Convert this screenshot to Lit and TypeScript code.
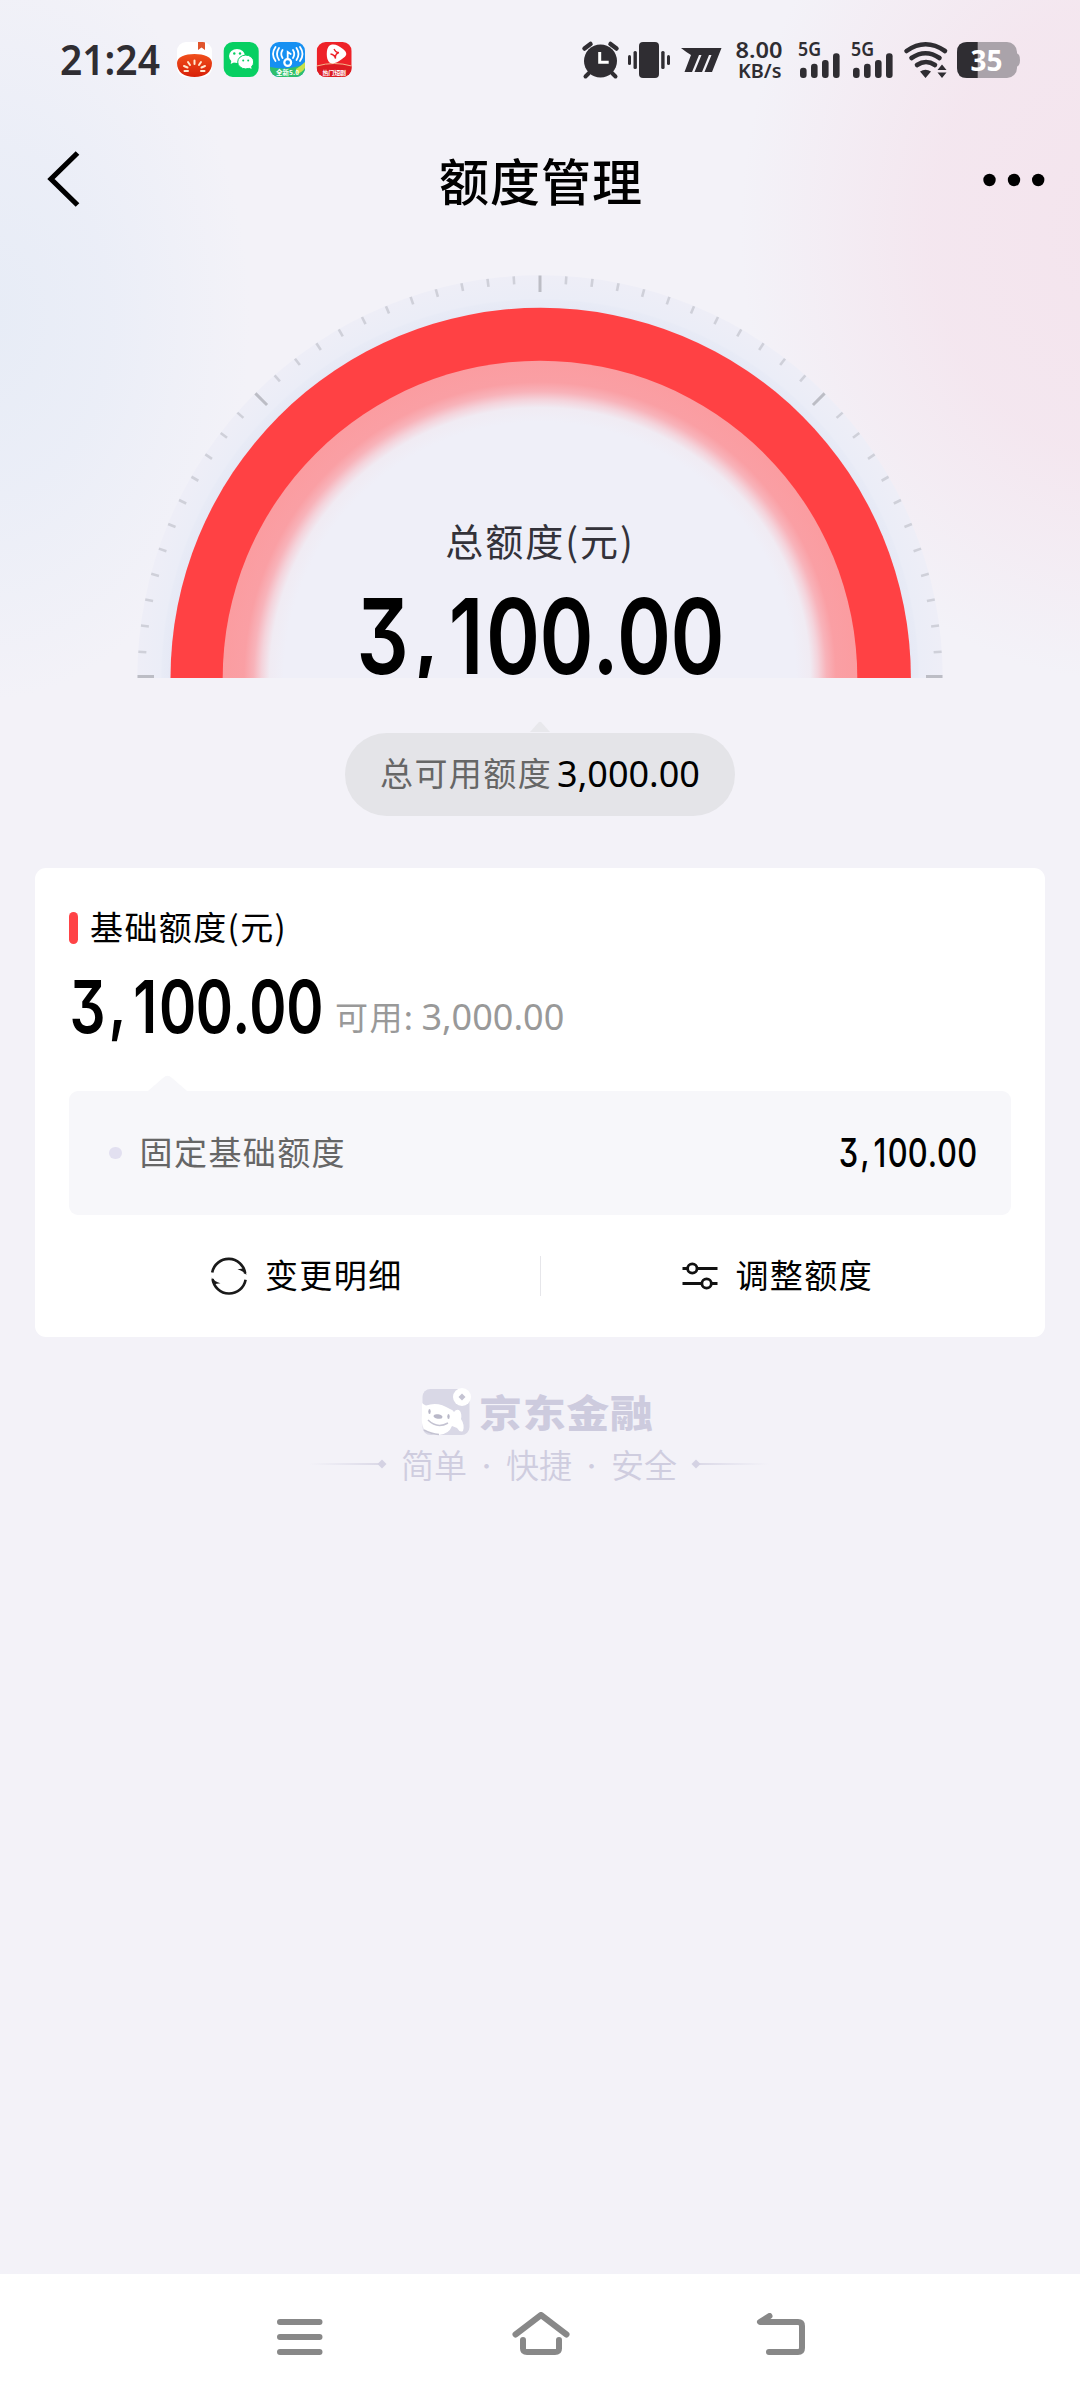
import { LitElement, html, css, svg } from "lit";
import { customElement, property } from "lit/decorators.js";

/** Amount set in a condensed DIN-like cut; glyph slots are laid out on a 361x80 grid. */
@customElement("din-amount")
class DinAmount extends LitElement {
  @property() value = "";
  @property({ type: Number }) width = 361;
  @property({ type: Number }) weight = 600;
  static styles = css`
    :host { display: block; }
    svg { display: block; overflow: visible; }
    text {
      font-family: Inter, "Liberation Sans", sans-serif;
      font-size: 105px;
      font-feature-settings: "cv09" 1;
      text-anchor: middle;
      fill: #000;
    }
  `;
  render() {
    const sx = 0.78;
    // Slot centres of the pattern d,ddd.dd
    const slots = [22.5, 66, 106, 153, 206.5, 245.5, 284, 337.5];
    return html`<svg width=${this.width} height=${(this.width * 80) / 361} viewBox="0 0 361 80">
      <text x="0" y="78" transform="scale(${sx} 1)" font-weight=${this.weight}>
        ${[...this.value].map((c, i) => svg`<tspan x=${slots[i] / sx} y=${c === "," ? 71 : 78}>${c}</tspan>`)}
      </text>
    </svg>`;
  }
}

@customElement("status-bar")
class StatusBar extends LitElement {
  static styles = css`
    :host { display: flex; height: 119px; padding: 0 56px 0 60px; justify-content: space-between; box-sizing: border-box; }
    svg { display: block; }
    text { font-family: "Noto Sans", "Open Sans", sans-serif; font-weight: 600; fill: #2f2d32; }
    .tiny { font-family: "Noto Sans CJK SC", sans-serif; font-weight: 700; fill: #fff; }
    .pct { font-weight: 700; fill: #fff; }
  `;
  bars(x: number) {
    return svg`
      <text x=${x - 2} y="56" font-size="19" textLength="23" lengthAdjust="spacingAndGlyphs">5G</text>
      <rect x=${x} y="67.7" width="6.6" height="10.3" rx="3"/>
      <rect x=${x + 11} y="63.7" width="6.6" height="14.3" rx="3"/>
      <rect x=${x + 22} y="60" width="6.6" height="18" rx="3"/>
      <rect x=${x + 33} y="53.3" width="6.6" height="24.7" rx="3"/>`;
  }
  render() {
    return html`
      <svg width="300" height="100" viewBox="60 0 300 100">
        <text x="60" y="74.500" font-size="42" textLength="100" lengthAdjust="spacingAndGlyphs">21:24</text>
        <defs>
          <linearGradient id="tomato" x1="0" y1="0" x2="0" y2="1"><stop offset="0" stop-color="#f0501c"/><stop offset="1" stop-color="#d81f08"/></linearGradient>
          <clipPath id="c1"><rect x="177" y="42" width="35" height="35" rx="9"/></clipPath>
          <clipPath id="c3"><rect x="270" y="42" width="35" height="35" rx="9"/></clipPath>
          <clipPath id="c4"><rect x="316.700" y="42" width="35" height="35" rx="9"/></clipPath>
        </defs>
        <g clip-path="url(#c1)">
          <rect x="177" y="42" width="35" height="35" fill="#fff"/>
          <path d="M198 42h7v8l-3.500-2.500L198 50z" fill="#e0542c"/>
          <path d="M177 63c0-6 8-9 17.500-9S212 57 212 63c0 9-7 14-17.500 14S177 72 177 63z" fill="url(#tomato)"/>
          <g stroke="#ffe9cf" stroke-width="2" stroke-linecap="round">
            <path d="M194.500 60.500v3.500M188 62l2 3M201 62l-2 3M184 66l3.500 1.500M205 66l-3.500 1.500M184.500 71h3.500M204.500 71H201"/>
          </g>
        </g>
        <rect x="223.700" y="42" width="35" height="35" rx="9" fill="#07cf62"/>
        <ellipse cx="237" cy="56" rx="8" ry="7" fill="#fff"/>
        <path d="M231.500 60l-.8 4 4-2z" fill="#fff"/>
        <ellipse cx="245.700" cy="62" rx="8" ry="6.900" fill="#fff" stroke="#07cf62" stroke-width="1"/>
        <path d="M248 67l3.500 2-.6-4z" fill="#fff"/>
        <g fill="#07cf62"><circle cx="234.300" cy="53.500" r="1.200"/><circle cx="240" cy="53.500" r="1.200"/><circle cx="243.200" cy="60.500" r="1"/><circle cx="248.200" cy="60.500" r="1"/></g>
        <g clip-path="url(#c3)">
          <rect x="270" y="42" width="35" height="35" fill="#1690f2"/>
          <path d="M270 67q17 4 35-3v13h-35z" fill="#2fbf6c"/>
          <path d="M296 69q5-3 9-7v6q-3 5-9 6z" fill="#c8e24a"/>
          <g fill="none" stroke="#fff" stroke-width="2.200" stroke-linecap="round">
            <circle cx="287.700" cy="62.500" r="3.400"/>
            <path d="M287.700 59V52l3 2M282.500 50q-2.500 4 0 8M293 50q2.500 4 0 8M279 48q-4 6 0 12M296.500 48q4 6 0 12M275.500 47q-5 7 0 14M300 47q5 7 0 14" stroke-width="1.800"/>
          </g>
          <text class="tiny" x="276" y="75" font-size="6.500" textLength="23">全新5.0</text>
        </g>
        <g clip-path="url(#c4)">
          <rect x="316.700" y="42" width="35" height="35" fill="#ee2228"/>
          <path d="M316.700 66q17.500-5 35 0v11h-35z" fill="#dc1c22"/>
          <path d="M316.700 66q17.500-5 35 0" stroke="#f5b58a" stroke-width="1" fill="none"/>
          <path d="M329 46c4-3 9-1 14 3 5 4 4 7-1 10-5 4-10 6-13 3-3-3-3-13 0-16z" fill="#fff"/>
          <path d="M334 49q2 4 5 3.500q-4 1-3.500 6q-1-4-5-4.500M335 58l.5-3" fill="none" stroke="#ee2228" stroke-width="1.300"/>
          <text class="tiny" x="322.500" y="74.500" font-size="6" textLength="23.500">热门短剧</text>
        </g>
      </svg>
      <svg width="446" height="100" viewBox="578 0 446 100" fill="#2f2d32">
        <circle cx="600.500" cy="61" r="16.500"/>
        <path d="M584.500 48.500l6-4.500M616.500 48.500l-6-4.500" stroke="#2f2d32" stroke-width="4.500" stroke-linecap="round"/>
        <path d="M589 73l-3.500 3.500M612 73l3.500 3.500" stroke="#2f2d32" stroke-width="4" stroke-linecap="round"/>
        <path d="M599.700 52v10.200h9" fill="none" stroke="#fff" stroke-width="3"/>
        <rect x="639" y="42" width="20" height="36" rx="4"/>
        <rect x="633.500" y="51" width="3.400" height="18" rx="1.500"/><rect x="628" y="55" width="3" height="10" rx="1.500"/>
        <rect x="661.200" y="51" width="3.400" height="18" rx="1.500"/><rect x="667" y="55" width="3" height="10" rx="1.500"/>
        <path d="M681 48h40.500l-9.500 24h-7.500l7-17h-2.500l-7 17h-7.500l7-17h-2.500l-7 17h-7.500l6.500-17q-5-3-10-7z"/>
        <text x="735.500" y="57.500" font-size="21" textLength="47" lengthAdjust="spacingAndGlyphs">8.00</text>
        <text x="738" y="78" font-size="19" textLength="43.500" lengthAdjust="spacingAndGlyphs">KB/s</text>
        ${this.bars(800)}${this.bars(853)}
        <g fill="none" stroke="#2f2d32" stroke-width="4.600" stroke-linecap="round">
          <path d="M906.500 51q19-13.500 38.500 0M911.500 58q14-9.500 28 0M917 65q9-6 18 0"/>
        </g>
        <path d="M920 71.500q5.500-3.500 11 0l-5.500 6.500zM942 64.500l4.500 5.500h-9zM942 78l4.500-5.500h-9z"/>
        <path d="M1015 53q5 0 5 7t-5 7z" fill="#aaa3aa"/>
        <rect x="957" y="42" width="60" height="36" rx="10" fill="#aaa3aa"/>
        <path d="M967 42h10.700v36H967q-10 0-10-10V52q0-10 10-10z"/>
        <text class="pct" x="970.500" y="70.500" font-size="28.500" textLength="32" lengthAdjust="spacingAndGlyphs">35</text>
      </svg>`;
  }
}

@customElement("quota-gauge")
class QuotaGauge extends LitElement {
  static styles = css`
    :host { display: grid; width: 810px; height: 405px; overflow: hidden; }
    .dial, .label { grid-area: 1 / 1; }
    .dial { display: block; }
    .label { display: flex; flex-direction: column; align-items: center; padding-top: 239px; }
    .caption { font-family: "Noto Sans CJK SC", sans-serif; font-size: 38px; line-height: 56px; letter-spacing: 2px; color: #33323a; margin-bottom: 28px; }
    .minor { stroke: #cfd0d9; stroke-width: 2.6; }
    .major { stroke: #bcbdc5; stroke-width: 3; }
  `;
  render() {
    const ticks = Array.from({ length: 49 }, (_, i) => i);
    return html`
      <svg class="dial" width="810" height="405" viewBox="-405 -405 810 405">
        <defs>
          <radialGradient id="glow" gradientUnits="userSpaceOnUse" cx="0" cy="0" r="320">
            <stop offset="0.800" stop-color="#efeff8"/>
            <stop offset="0.845" stop-color="#f0ebf3"/>
            <stop offset="0.870" stop-color="#f4d3db"/>
            <stop offset="0.895" stop-color="#f8b3ba"/>
            <stop offset="0.925" stop-color="#fa9fa4"/>
            <stop offset="1" stop-color="#fb9ca0"/>
          </radialGradient>
          <radialGradient id="rim" gradientUnits="userSpaceOnUse" cx="0" cy="0" r="402.700">
            <stop offset="0.910" stop-color="#e5e8f5"/>
            <stop offset="0.938" stop-color="#e8ebf6"/>
            <stop offset="0.942" stop-color="#ebedf7"/>
            <stop offset="1" stop-color="#eeeef7"/>
          </radialGradient>
        </defs>
        <circle r="402.700" fill="url(#rim)"/>
        <circle cx=".7" r="370.200" fill="#ff4144"/>
        <circle r="317.300" fill="url(#glow)"/>
        ${ticks.map((i) => {
          const major = i % 12 === 0;
          const flat = i === 0 ? 1.5 : i === 48 ? -1.5 : 0;
          return svg`<line class=${major ? "major" : "minor"} x1="-402.500" x2=${major ? -386 : -394.5}
            y1=${-flat} y2=${-flat} transform="rotate(${i * 3.75})"/>`;
        })}
      </svg>
      <div class="label">
        <div class="caption">总额度(元)</div>
        <din-amount value="3,100.00" width="361"></din-amount>
      </div>`;
  }
}

@customElement("app-root")
class AppRoot extends LitElement {
  static styles = css`
    :host {
      display: flex; flex-direction: column; width: 1080px; height: 2400px; box-sizing: border-box;
      font-family: "Noto Sans", "Noto Sans CJK SC", sans-serif; color: #000;
      background:
        radial-gradient(ellipse 380px 450px at 1120px 230px, #f4e4edff 0%, #f4e5eee0 50%, #f4e8f000 100%),
        radial-gradient(ellipse 260px 380px at -10px 320px, #e7ecf6ff 0%, #e9edf7d0 45%, #eef0f800 100%),
        #f3f2f8;
    }
    svg { display: block; }
    .header { display: flex; align-items: center; justify-content: space-between; height: 122px; padding: 0 34px 0 47px; }
    .title { font-family: "Noto Sans CJK SC", sans-serif; font-size: 50px; letter-spacing: 1px; line-height: 80px; font-weight: 450; padding: 0 0 2px 19px; }
    .hero { display: flex; flex-direction: column; align-items: center; padding-top: 32px; }
    .tip { margin-top: 43px; }
    .pill {
      display: flex; align-items: center; justify-content: center; gap: 5px; width: 390px; height: 83px; margin-top: 1px; padding-bottom: 3px;
      border-radius: 42px; background: #e4e4e8; font-size: 36px; box-sizing: border-box;
    }
    .cjk { font-family: "Noto Sans CJK SC", sans-serif; font-size: 33px; letter-spacing: 1.4px; line-height: 48px; padding-bottom: 4px; }
    .pill .cjk { padding-bottom: 3px; }
    .muted { color: #666; }
    .card { display: flex; flex-direction: column; margin: 52px 35px 0; height: 469px; padding: 0 34px; border-radius: 11px; background: #fff; box-sizing: border-box; }
    .heading { display: flex; align-items: center; gap: 12px; padding-top: 36px; height: 48px; }
    .mark { width: 9px; height: 32px; border-radius: 4.5px; background: #ff4346; }
    .total { display: flex; align-items: flex-end; gap: 14px; height: 82px; padding-left: 3px; color: #999; }
    .avail { display: flex; align-items: baseline; gap: 7px; font-size: 36px; line-height: 48px; margin-bottom: -10px; }
    .notch { margin: 41px 0 0 79px; }
    .panel { display: flex; align-items: center; height: 124px; padding: 0 35px 0 40px; border-radius: 9px; background: #f7f7fa; box-sizing: border-box; }
    .dot { width: 12.600px; height: 12.600px; border-radius: 50%; background: #e2e0f0; margin-right: 18px; }
    .grow { flex: 1; }
    .actions { display: flex; align-items: center; height: 122px; }
    .action { display: flex; flex: 1; align-items: center; justify-content: center; gap: 17px; padding-left: 4px; }
    .rule { width: 1px; height: 40px; background: #e6e6ea; }
    .brand { display: flex; flex-direction: column; align-items: center; margin-top: 49px; color: #cdcbde; }
    .logo { display: flex; align-items: center; gap: 8px; height: 52px; padding-right: 7px; }
    .name { font-family: "Noto Sans CJK SC", sans-serif; overflow: visible; }
    .slogan { display: flex; align-items: center; height: 52px; gap: 14px; color: #cfcddf; padding-right: 2px; }
    .slogan .cjk { letter-spacing: 0; font-size: 33px; font-weight: 350; padding-bottom: 1px; display: flex; }
    .sep { width: 39px; text-align: center; font-size: 22px; }
    .nav { display: flex; align-items: center; justify-content: space-between; margin-top: auto; height: 126px; padding: 0 272px 0 274px; background: #fff; }
  `;
  render() {
    return html`
      <status-bar></status-bar>
      <div class="header">
        <svg width="34" height="58" viewBox="0 0 34 58"><path d="M30.500 2L4 28l26.500 26" fill="none" stroke="#000" stroke-width="5.200"/></svg>
        <div class="title">额度管理</div>
        <svg width="64" height="14" viewBox="0 0 64 14"><circle cx="7.500" cy="7" r="6.200"/><circle cx="32" cy="7" r="6.200"/><circle cx="56.200" cy="7" r="6.200"/></svg>
      </div>
      <div class="hero">
        <quota-gauge></quota-gauge>
        <svg class="tip" width="20" height="11" viewBox="0 0 20 11"><path d="M0 11L8.500 1.500q1.500-1.500 3 0L20 11z" fill="#e8e8ec"/></svg>
        <div class="pill"><span class="cjk muted">总可用额度</span><span>3,000.00</span></div>
      </div>
      <div class="card">
        <div class="heading"><span class="mark"></span><span class="cjk">基础额度(元)</span></div>
        <div class="total">
          <din-amount value="3,100.00" width="249"></din-amount>
          <div class="avail"><span class="cjk">可用:</span><span>3,000.00</span></div>
        </div>
        <svg class="notch" width="40" height="16" viewBox="0 0 40 16"><path d="M0 16L15 3q4.500-4.500 9 0l15 13z" fill="#f7f7fa"/></svg>
        <div class="panel">
          <span class="dot"></span><span class="cjk muted">固定基础额度</span><span class="grow"></span>
          <din-amount value="3,100.00" width="136" weight="500"></din-amount>
        </div>
        <div class="actions">
          <div class="action">
            <svg width="38" height="38" viewBox="0 0 38 38" fill="none" stroke="#1a1a1a" stroke-width="2.600">
              <path d="M2.200 15.600A16.700 16.700 0 0 1 35.200 16.500M35.600 22.800A16.700 16.700 0 0 1 2.600 22"/>
              <path d="M27.500 12.200q4-.2 7-1.200l2 7q-3-4-9-5.800zM10.500 26.300q-4 .2-7 1.200l-2-7q3 4 9 5.800z" fill="#1a1a1a" stroke="none"/>
            </svg>
            <span class="cjk">变更明细</span>
          </div>
          <span class="rule"></span>
          <div class="action">
            <svg width="36" height="28" viewBox="0 0 36 28" fill="none" stroke="#111" stroke-width="2.800">
              <path d="M.5 6.500h5M15 6.500h20.500M.5 21.500h19M29.500 21.500h6"/><circle cx="10.300" cy="6.500" r="4.700"/><circle cx="24.600" cy="21.500" r="4.700"/>
            </svg>
            <span class="cjk">调整额度</span>
          </div>
        </div>
      </div>
      <div class="brand">
        <div class="logo">
          <svg width="50" height="50" viewBox="0 0 50 50">
            <rect x="1.500" y="2" width="47" height="46" rx="8" fill="#d9d8e6"/>
            <path d="M1 16q2 1.500 4 2.500Q17 14 29 22q3 1 4 3 3-4 6-1 2 3 1 8 4 6 2 12-3 2-6-3l-5-2q-3 8-13 9-9 0-15-5Q0 36 1 28z" fill="#fff"/>
            <circle cx="41" cy="10" r="9" fill="#fff"/><path d="M41 6.500l3.500 3.500-3.500 3.500L37.500 10z" fill="#c4c3d2"/>
            <ellipse cx="17" cy="29.500" rx="4.500" ry="2.200" transform="rotate(10 17 29.500)" fill="#b9b8c8"/>
            <ellipse cx="8.500" cy="24.500" rx="1.200" ry="2.600" fill="#b9b8c8"/><ellipse cx="27.500" cy="29.500" rx="1.200" ry="2.600" fill="#b9b8c8"/>
            <path d="M7 33q9 9 20 3" fill="none" stroke="#c4c3d2" stroke-width="1.500"/>
            <path d="M3 43q7 4 15 4.500" fill="none" stroke="#c4c3d2" stroke-width="1.500"/>
          </svg>
          <svg class="name" width="174" height="44" viewBox="0 0 174 44">
            <text x="0" y="42" transform="scale(1 .88)" font-size="43" font-weight="800" textLength="174" fill="#cdcbde">京东金融</text>
          </svg>
        </div>
        <div class="slogan">
          <svg width="78" height="10" viewBox="0 0 78 10"><defs><linearGradient id="lf"><stop offset="0" stop-color="#dddcea" stop-opacity="0"/><stop offset="1" stop-color="#dbd9e7"/></linearGradient></defs><rect y="4" width="70" height="2" fill="url(#lf)"/><path d="M73 0.500l4.500 4.500-4.500 4.500L68.500 5z" fill="#d4d2e3"/></svg>
          <span class="cjk"><span>简单</span><span class="sep">·</span><span>快捷</span><span class="sep">·</span><span>安全</span></span>
          <svg width="78" height="10" viewBox="0 0 78 10"><defs><linearGradient id="rt"><stop offset="0" stop-color="#dbd9e7"/><stop offset="1" stop-color="#dddcea" stop-opacity="0"/></linearGradient></defs><rect x="8" y="4" width="70" height="2" fill="url(#rt)"/><path d="M5 0.500l4.500 4.500L5 9.500 .5 5z" fill="#d4d2e3"/></svg>
        </div>
      </div>
      <div class="nav">
        <svg width="52" height="46" viewBox="274 2314 52 46" stroke="#888" stroke-width="6" stroke-linecap="round"><path d="M280 2322h39.500M280 2337h39.500M280 2352h39.500"/></svg>
        <svg width="62" height="50" viewBox="509 2312 62 50" fill="none" stroke="#888" stroke-width="6" stroke-linecap="round" stroke-linejoin="round"><path d="M514.500 2334.500L540 2315l25.500 19.500M522 2340v8.500q0 3.500 4 3.500h28q4 0 4-3.500V2340"/></svg>
        <svg width="52" height="48" viewBox="755 2313 52 48" fill="none" stroke="#888" stroke-width="6" stroke-linecap="round" stroke-linejoin="round"><path d="M768.500 2316L759 2322h38q4 0 4 4v22q0 4-4 4h-29"/></svg>
      </div>`;
  }
}
